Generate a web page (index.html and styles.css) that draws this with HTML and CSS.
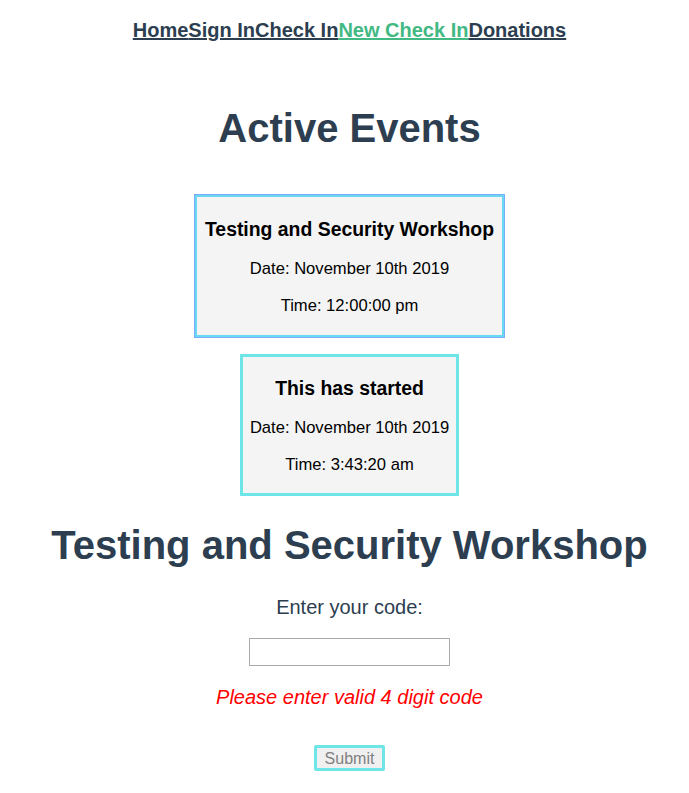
FILE: index.html
```html
<!DOCTYPE html>
<html>
<head>
<meta charset="utf-8">
<link rel="stylesheet" href="styles.css">
</head>
<body>
<div class="app">
  <nav class="nav">
    <a href="#" class="nav-link">Home</a><a href="#" class="nav-link">Sign In</a><a href="#" class="nav-link">Check In</a><a href="#" class="nav-link active">New Check In</a><a href="#" class="nav-link">Donations</a>
  </nav>
  <h1 class="title title-events">Active Events</h1>
  <div class="card card-focus">
    <h3 class="card-title">Testing and Security Workshop</h3>
    <p class="card-text">Date: November 10th 2019</p>
    <p class="card-text">Time: 12:00:00 pm</p>
  </div>
  <div class="card card-second">
    <h3 class="card-title">This has started</h3>
    <p class="card-text">Date: November 10th 2019</p>
    <p class="card-text">Time: 3:43:20 am</p>
  </div>
  <h1 class="title title-event">Testing and Security Workshop</h1>
  <p class="label">Enter your code:</p>
  <input class="code-input" type="text">
  <p class="error">Please enter valid 4 digit code</p>
  <button class="submit" type="button">Submit</button>
</div>
</body>
</html>
```

FILE: styles.css
```css
html, body {
  margin: 0;
  padding: 0;
  background: #ffffff;
}
body {
  padding: 8px 0 8px 18px;
  width: 663px;
}
.app {
  font-family: "Liberation Sans", Arial, Helvetica, sans-serif;
  color: #2c3e50;
  display: flex;
  flex-direction: column;
  align-items: center;
  text-align: center;
}
.nav {
  padding-top: 11px;
  font-size: 20px;
  line-height: 23px;
  font-weight: bold;
  display: flex;
}
.nav-link {
  color: #2c3e50;
  text-decoration: underline;
}
.nav-link.active {
  color: #42b983;
}
.title {
  font-size: 40px;
  line-height: 46px;
  font-weight: bold;
  margin: 0;
}
.title-events {
  margin-top: 63px;
  margin-bottom: 43px;
}
.card {
  background: #f4f4f4;
  padding: 20px 7px 19px;
  border: 3px solid #6ee6e8;
  color: #000;
}
.card-focus {
  border: 2px solid #6ad8f4;
  outline: 1px solid #78aef8;
  padding-left: 8px;
  padding-right: 8px;
  padding-bottom: 20px;
  margin-top: 1px;
  margin-bottom: 17px;
}
.card-second {
  padding-top: 19px;
  padding-bottom: 19px;
}
.card-title {
  margin: 0;
  font-size: 19.4px;
  line-height: 24px;
  font-weight: bold;
}
.card-text {
  margin: 18px 0 0;
  font-size: 16.6px;
  line-height: 19px;
}
.title-event {
  margin-top: 26px;
}
.label {
  margin: 28px 0 0;
  font-size: 20px;
  line-height: 23px;
}
.code-input {
  margin-top: 19px;
  width: 201px;
  height: 28px;
  box-sizing: border-box;
  border: 1px solid #a9a9a9;
  background: #fff;
  padding: 0 4px;
}
.error {
  margin: 20px 0 0;
  font-size: 20px;
  line-height: 23px;
  font-style: italic;
  color: #ff0000;
}
.submit {
  margin-top: 36px;
  font-family: "Liberation Sans", Arial, sans-serif;
  font-size: 16px;
  line-height: 19px;
  color: #808080;
  background: #f0f0f0;
  border: 3px solid #6ee6e8;
  border-radius: 2px;
  padding: 0 8px;
  height: 26px;
}
```
